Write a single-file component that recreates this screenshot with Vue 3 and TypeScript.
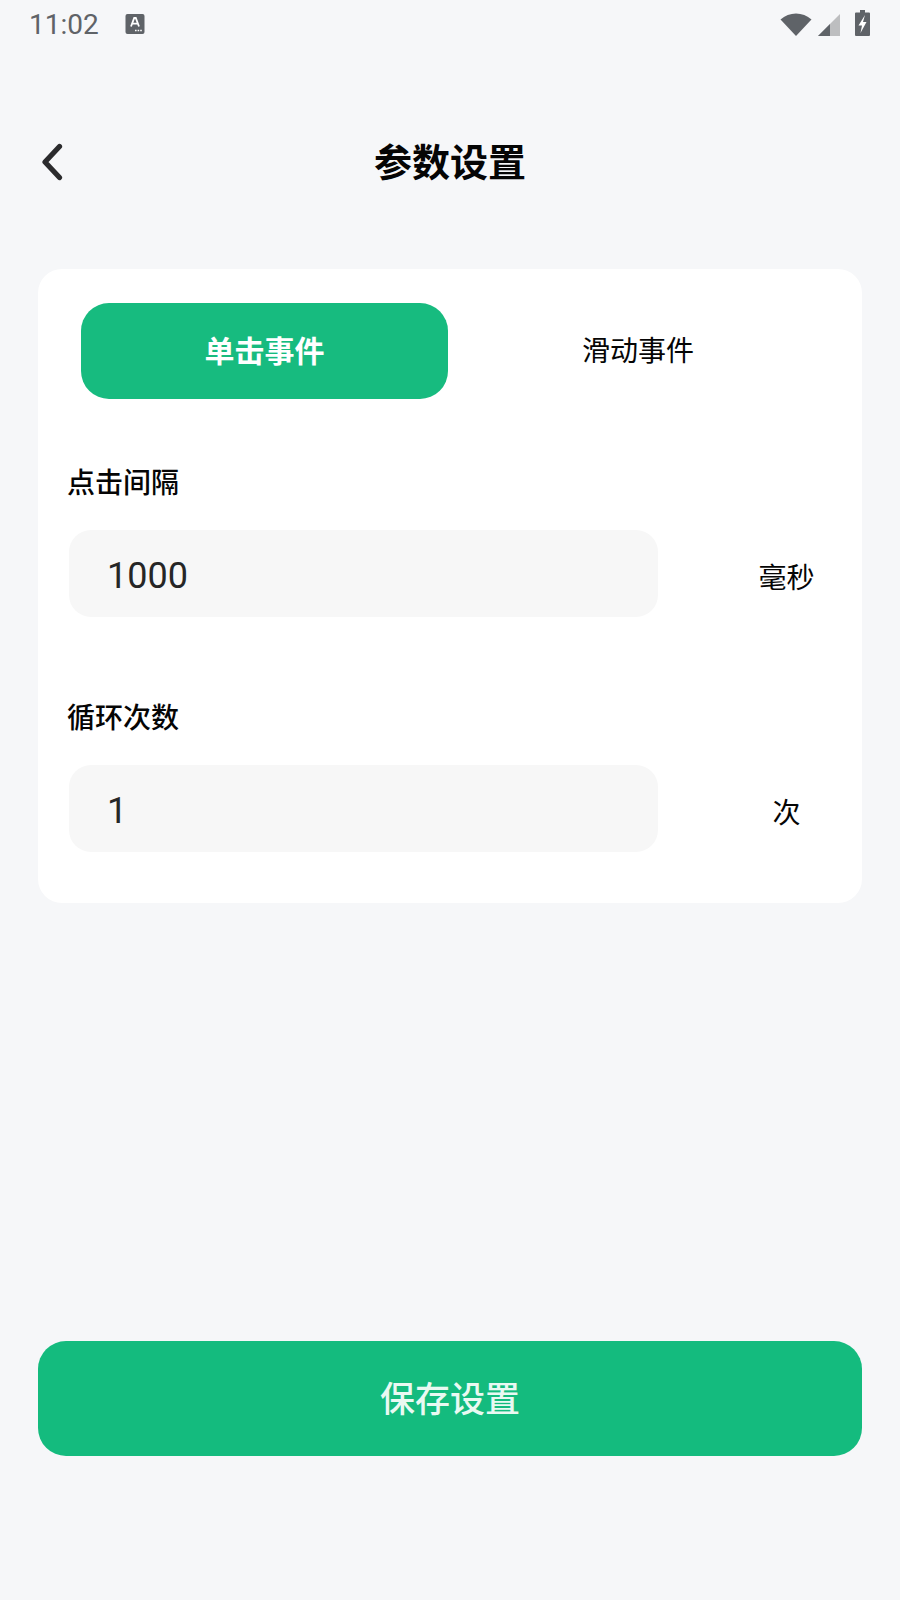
<script setup lang="ts">
const fields = [
  { label: '点击间隔', value: '1000', unit: '毫秒' },
  { label: '循环次数', value: '1', unit: '次' },
]
</script>

<template>
  <div class="page">
    <div class="status">
      <div class="status-left">
        <span class="time">11:02</span>
        <svg class="a-icon" width="20" height="22" viewBox="0 0 20 22">
          <rect x="0.5" y="1" width="19" height="20" rx="2" fill="#5f6368" />
          <path d="M6 13.5 L9.2 5 H10.8 L14 13.5 M7.2 10.6 H12.8" fill="none" stroke="#fff" stroke-width="1.8" />
          <path d="M10 17.5h1.6M12.6 17.5h1.6M15.2 17.5h1.6" stroke="#fff" stroke-width="1.6" />
        </svg>
      </div>
      <div class="status-right">
        <svg class="wifi" width="32" height="24" viewBox="0 0 32 24">
          <path d="M0.5 7.5 C9 -0.5 23 -0.5 31.5 7.5 L16 24 Z" fill="#5f6368" />
        </svg>
        <svg class="signal" width="22" height="22" viewBox="0 0 22 22">
          <path d="M0 22 L22 0 V22 Z" fill="#bdbec0" />
          <path d="M0 22 L12 10 V22 Z" fill="#5f6368" />
        </svg>
        <svg class="battery" width="15" height="26" viewBox="0 0 15 26">
          <path d="M5 0 H10 V2.5 H14 a1 1 0 0 1 1 1 V25 a1 1 0 0 1 -1 1 H1 a1 1 0 0 1 -1 -1 V3.5 a1 1 0 0 1 1 -1 H5 Z" fill="#5f6368" />
          <path d="M10 5 L3.5 15.5 H7 L5.5 23 L11.5 12 H8 Z" fill="#fff" />
        </svg>
      </div>
    </div>

    <header class="header">
      <svg class="back" width="24" height="38" viewBox="0 0 24 38">
        <path d="M18.5 3.5 L4 19 L18.5 34.5" fill="none" stroke="#2b2b2d" stroke-width="5.2" stroke-linecap="round" stroke-linejoin="round" />
      </svg>
      <h1 class="title">参数设置</h1>
    </header>

    <section class="card">
      <div class="tabs">
        <div class="tab active">单击事件</div>
        <div class="tab second">滑动事件</div>
      </div>
      <div v-for="f in fields" :key="f.label" class="field">
        <div class="label">{{ f.label }}</div>
        <div class="row">
          <div class="input">{{ f.value }}</div>
          <div class="unit">{{ f.unit }}</div>
        </div>
      </div>
    </section>

    <div class="spacer"></div>
    <button class="save">保存设置</button>
  </div>
</template>

<style>
html, body { margin: 0; background: #f6f7f9; }
</style>

<style scoped>
.page {
  width: 900px;
  height: 1600px;
  box-sizing: border-box;
  background: #f6f7f9;
  display: flex;
  flex-direction: column;
  padding-bottom: 144px;
  font-family: "Noto Sans CJK SC", "Noto Sans", sans-serif;
  overflow: hidden;
}
.status {
  height: 50px;
  display: flex;
  justify-content: space-between;
  align-items: center;
  padding: 0 30px 0 29px;
}
.status-left { display: flex; align-items: center; gap: 26px; }
.status-right { display: flex; align-items: center; gap: 6px; }
.status-right .wifi { margin-top: -3px; }
.status-right .battery { margin: -4px 0 0 9px; }
.time {
  font-family: Roboto, sans-serif;
  font-size: 28px;
  color: #5f6368;
  line-height: 50px;
}
.a-icon { margin-top: -3px; }
.header {
  height: 96px;
  margin-top: 65px;
  padding-left: 41px;
  display: flex;
  align-items: center;
  position: relative;
  justify-content: flex-start;
}
.back { margin-top: -2px; }
.title {
  position: absolute;
  left: 0;
  right: 0;
  top: -3px;
  margin: 0;
  text-align: center;
  font-size: 38px;
  font-weight: 700;
  color: #050505;
  line-height: 96px;
}
.card {
  margin: 58px 38px 0;
  height: 634px;
  box-sizing: border-box;
  background: #fff;
  border-radius: 24px;
  padding: 34px 0 0 31px;
}
.tabs {
  display: flex;
  padding-left: 12px;
  height: 96px;
  margin-bottom: 62px;
}
.tab {
  flex: none;
  width: 367px;
  height: 96px;
  box-sizing: border-box;
  padding-bottom: 4px;
  border-radius: 28px;
  display: flex;
  align-items: center;
  justify-content: center;
  font-size: 28px;
  color: #050505;
}
.tab.second { width: 380px; }
.tab.active {
  background: #17bb7f;
  color: #fff;
  font-weight: 700;
  font-size: 30px;
}
.field { margin-bottom: 79px; }
.field:last-child { margin-bottom: 0; }
.label {
  font-size: 28px;
  font-weight: 500;
  color: #050505;
  line-height: 40px;
  margin-bottom: 29px;
  margin-left: -2px;
}
.row { display: flex; align-items: center; }
.input {
  width: 589px;
  height: 87px;
  box-sizing: border-box;
  background: #f7f7f7;
  border-radius: 22px;
  padding: 4px 0 0 38px;
  font-family: Roboto, sans-serif;
  font-size: 36px;
  color: #262626;
  display: flex;
  align-items: center;
}
.unit {
  flex: 1;
  text-align: center;
  font-size: 28px;
  color: #050505;
  white-space: nowrap;
  padding: 5px 0 0 53px;
}
.spacer { flex: 1; }
.save {
  margin: 0 38px;
  height: 115px;
  border: none;
  border-radius: 28px;
  background: #14bb7e;
  color: #e9f9f2;
  font-family: inherit;
  font-size: 35px;
  font-weight: 500;
  padding: 0 0 4px;
}
</style>
